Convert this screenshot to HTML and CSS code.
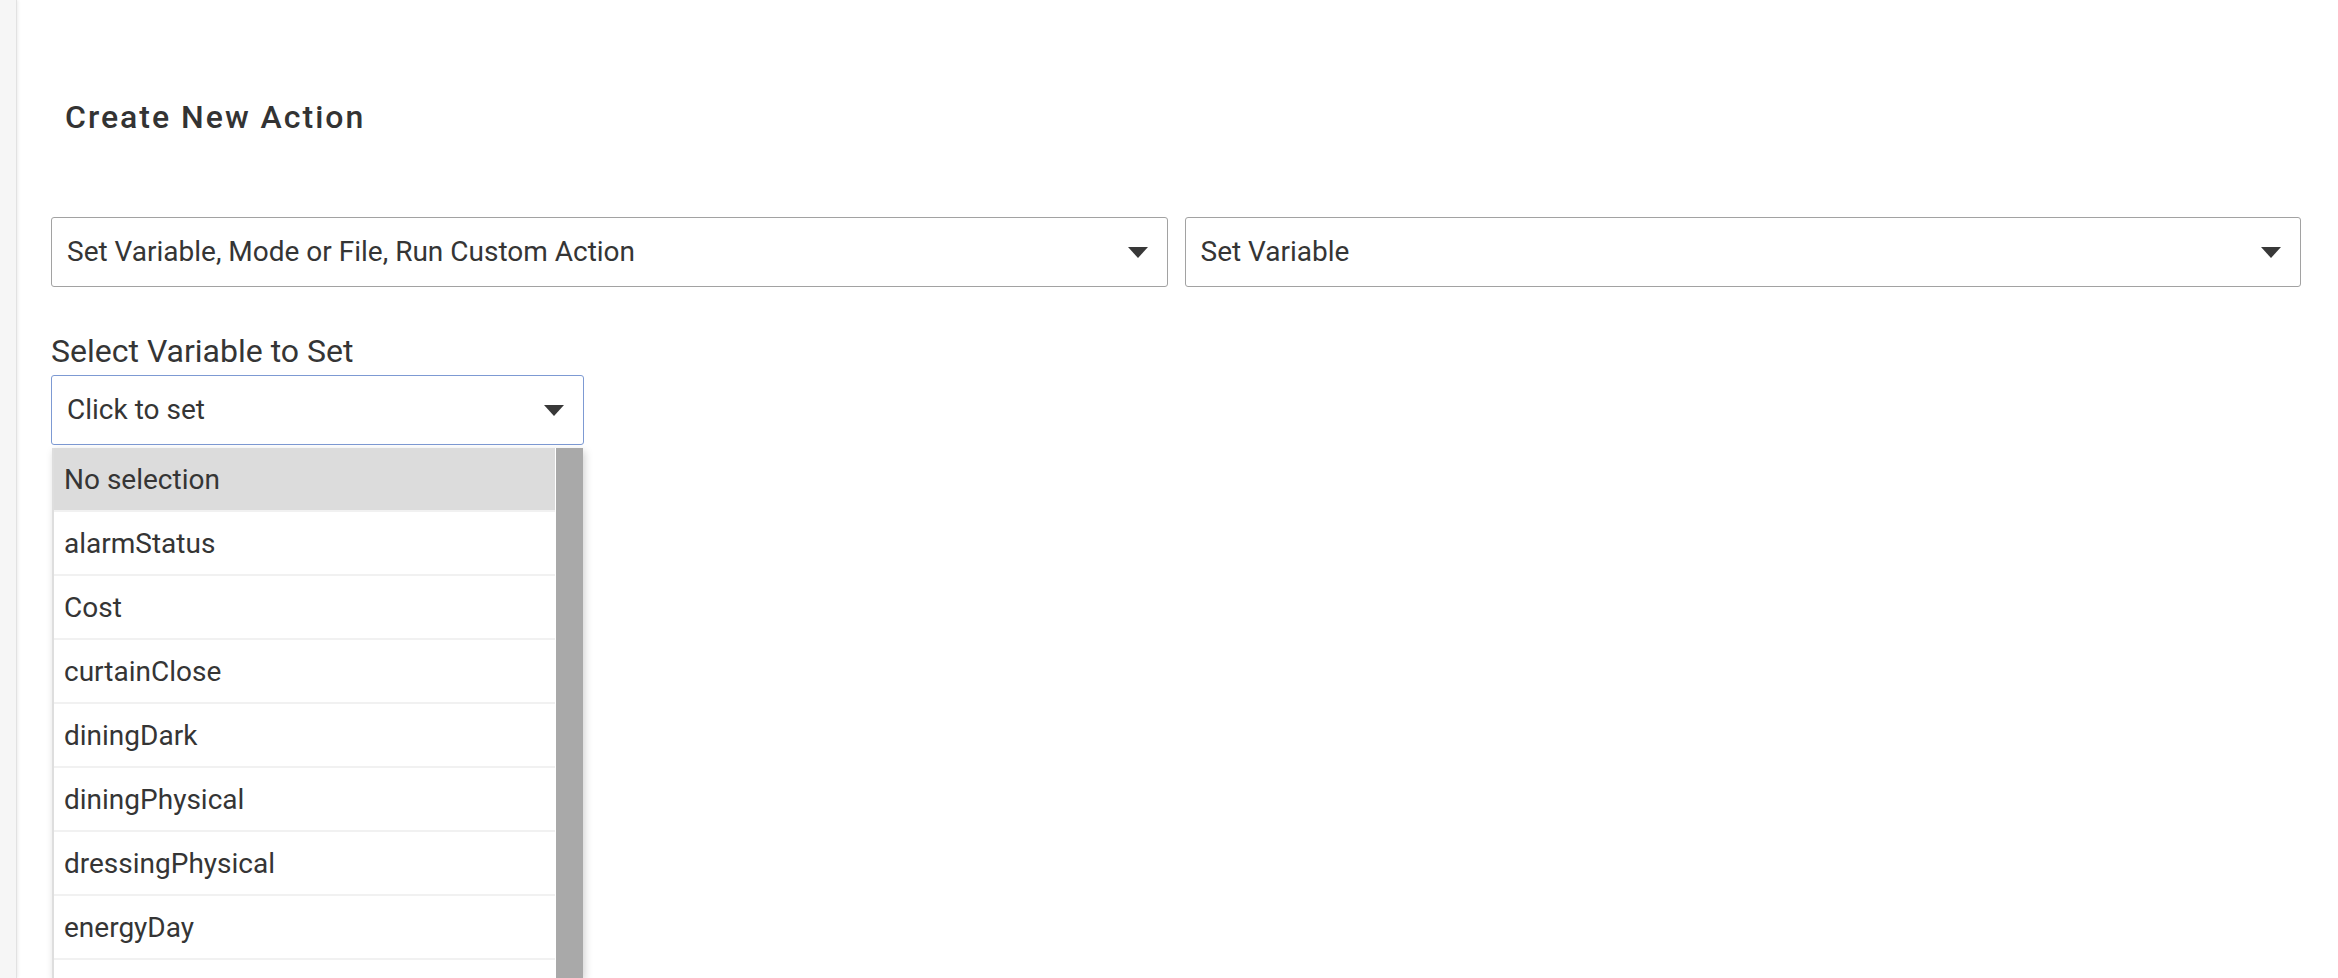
FILE: index.html
```html
<!DOCTYPE html>
<html lang="en">
<head>
    <meta charset="UTF-8">
    <meta name="viewport" content="width=device-width, initial-scale=1.0">
    <title>Create New Action</title>
    <link rel="stylesheet" href="styles.css">
</head>
<body>
    <div class="side-strip"></div>

    <main class="panel">
        <h2 class="panel-title">Create New Action</h2>

        <!-- action type pickers -->
        <div class="select-row">
            <div class="select-box">
                <span class="select-text">Set Variable, Mode or File, Run Custom Action</span>
                <span class="caret"></span>
            </div>
            <div class="select-box">
                <span class="select-text">Set Variable</span>
                <span class="caret"></span>
            </div>
        </div>

        <label class="field-label">Select Variable to Set</label>
        <div class="picker">
            <div class="select-box focused">
                <span class="select-text">Click to set</span>
                <span class="caret"></span>
            </div>

            <!-- open dropdown, runs past the bottom of the window -->
            <div class="dropdown">
                <ul class="option-list">
                    <li class="option current">No selection</li>
                    <li class="option">alarmStatus</li>
                    <li class="option">Cost</li>
                    <li class="option">curtainClose</li>
                    <li class="option">diningDark</li>
                    <li class="option">diningPhysical</li>
                    <li class="option">dressingPhysical</li>
                    <li class="option">energyDay</li>
                </ul>
                <div class="scroll-thumb"></div>
            </div>
        </div>
    </main>
</body>
</html>
```

FILE: styles.css
```css
html, body {
    margin: 0;
    height: 100%;
    overflow: hidden;
}
body {
    font-family: Roboto, "Liberation Sans", Arial, sans-serif;
    color: #353535;
    background: #fff;
    display: flex;
}
.side-strip {
    width: 16px;
    flex-shrink: 0;
    background: #f6f6f6;
    border-right: 1px solid #e2e2e2;
    box-shadow: 1px 0 3px rgba(0, 0, 0, 0.08);
}
.panel {
    flex: 1;
    padding: 98px 37px 0 34px;
}
.panel-title {
    margin: 0 0 81px 14px;
    font-size: 32px;
    line-height: 38px;
    font-weight: 500;
    letter-spacing: 2px;
    color: #333;
}
.select-row {
    display: flex;
    gap: 17px;
}
.select-row .select-box {
    flex: 1;
}
.select-box {
    box-sizing: border-box;
    height: 70px;
    display: flex;
    align-items: center;
    padding: 0 19px 0 15px;
    border: 1px solid #a2a2a2;
    border-radius: 3px;
    background: #fff;
}
.select-box.focused {
    border-color: #7d9ad3;
}
.select-text {
    flex: 1;
    font-size: 28px;
    line-height: 34px;
    white-space: nowrap;
    overflow: hidden;
}
.caret {
    width: 0;
    height: 0;
    border-left: 10px solid transparent;
    border-right: 10px solid transparent;
    border-top: 11px solid #383838;
    filter: blur(0.4px);
}
.field-label {
    display: block;
    margin: 46px 0 5px;
    font-size: 32px;
    line-height: 37px;
}
.picker {
    position: relative;
    width: 533px;
}
.dropdown {
    position: absolute;
    top: 73px;
    left: 1px;
    right: 1px;
    height: 530px;
    display: flex;
    background: #fff;
    border-left: 2px solid #dedede;
    box-shadow: 2px 3px 8px rgba(0, 0, 0, 0.18);
    overflow: hidden;
}
.option-list {
    flex: 1;
    margin: 0;
    padding: 0;
    list-style: none;
}
.option {
    height: 62px;
    display: flex;
    align-items: center;
    padding-left: 10px;
    font-size: 28px;
    border-bottom: 2px solid #f1f1f1;
}
.option.current {
    background: #dcdcdc;
}
.scroll-thumb {
    width: 27px;
    margin-left: 1px;
    background: #a9a9a9;
}
```
